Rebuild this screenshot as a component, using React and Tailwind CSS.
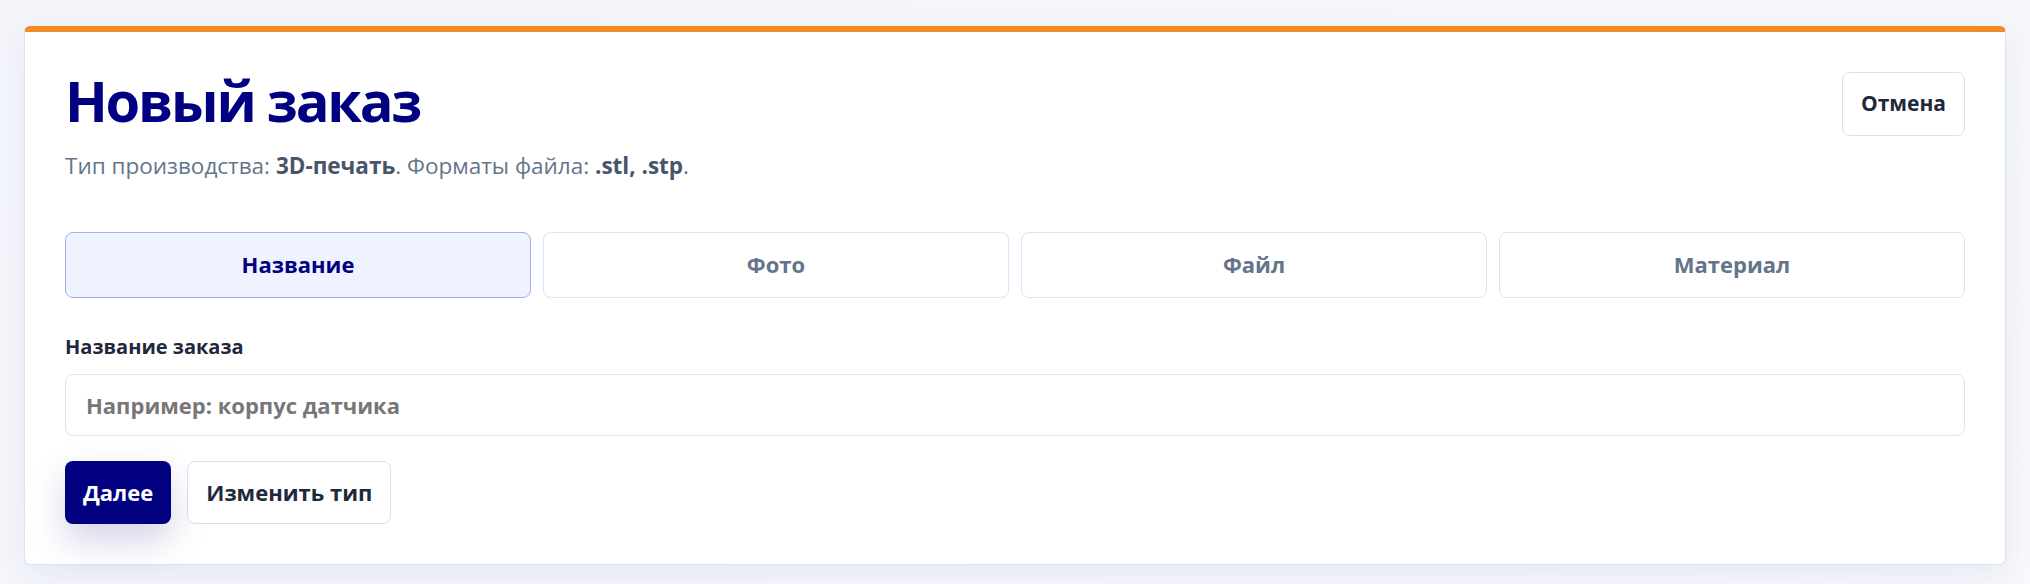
import { useState } from "react";

const steps = ["Название", "Фото", "Файл", "Материал"];

const NewOrder = () => {
  const [step, setStep] = useState(0);
  const [title, setTitle] = useState("");

  return (
    <div className="min-h-screen bg-gradient-to-br from-[#f4f5fb] to-[#f8f9fd] px-6 pt-[26px] pb-5 font-['Open_Sans',sans-serif]">
      <div className="rounded-md border border-[#dce2f6] border-t-[6px] border-t-[#f28c28] bg-white p-10 shadow-[0_12px_32px_rgba(40,50,140,0.08)]">
        <div className="flex items-start justify-between">
          <div>
            <h1 className="text-[56px] font-bold leading-none tracking-[-0.04em] text-[#000080]">
              Новый заказ
            </h1>
            <p className="mt-[21px] text-[22.5px] text-[#64748b]">
              Тип производства: <strong className="font-bold text-[#475569]">3D-печать</strong>. Форматы файла:{" "}
              <strong className="font-bold text-[#475569]">.stl, .stp</strong>.
            </p>
          </div>

          <button className="h-16 rounded-lg border border-[#d8dff5] bg-white px-[18px] text-[21px] font-bold text-[#1e293b]">
            Отмена
          </button>
        </div>

        <div className="mt-[49px] grid grid-cols-4 gap-3">
          {steps.map((s, i) => (
            <button
              key={s}
              onClick={() => setStep(i)}
              className={
                i === step
                  ? "h-[66px] rounded-lg border border-[#9eb0ee] bg-[#eef3ff] text-[22px] font-bold text-[#000080]"
                  : "h-[66px] rounded-lg border border-[#dde2f6] bg-white text-[22px] font-bold text-[#64748b]"
              }
            >
              {s}
            </button>
          ))}
        </div>

        <label className="mt-[34px] block text-[20px] font-bold text-[#1e293b]">
          Название заказа
        </label>
        <input
          value={title}
          onChange={(e) => setTitle(e.target.value)}
          placeholder="Например: корпус датчика"
          className="mt-[12px] h-[62px] w-full rounded-lg border border-[#dde2f6] px-5 text-[22px] font-bold text-[#1e293b] outline-none placeholder:text-[#777777]"
        />

        <div className="mt-[25px] flex gap-4">
          <button className="h-[63px] rounded-lg bg-[#000080] px-[18px] text-[22px] font-bold text-white shadow-[0_16px_36px_rgba(0,0,128,0.18)]">
            Далее
          </button>
          <button className="h-[63px] rounded-lg border border-[#d8dff5] bg-white px-[18px] text-[22px] font-bold text-[#1e293b]">
            Изменить тип
          </button>
        </div>
      </div>
    </div>
  );
};

export default NewOrder;
